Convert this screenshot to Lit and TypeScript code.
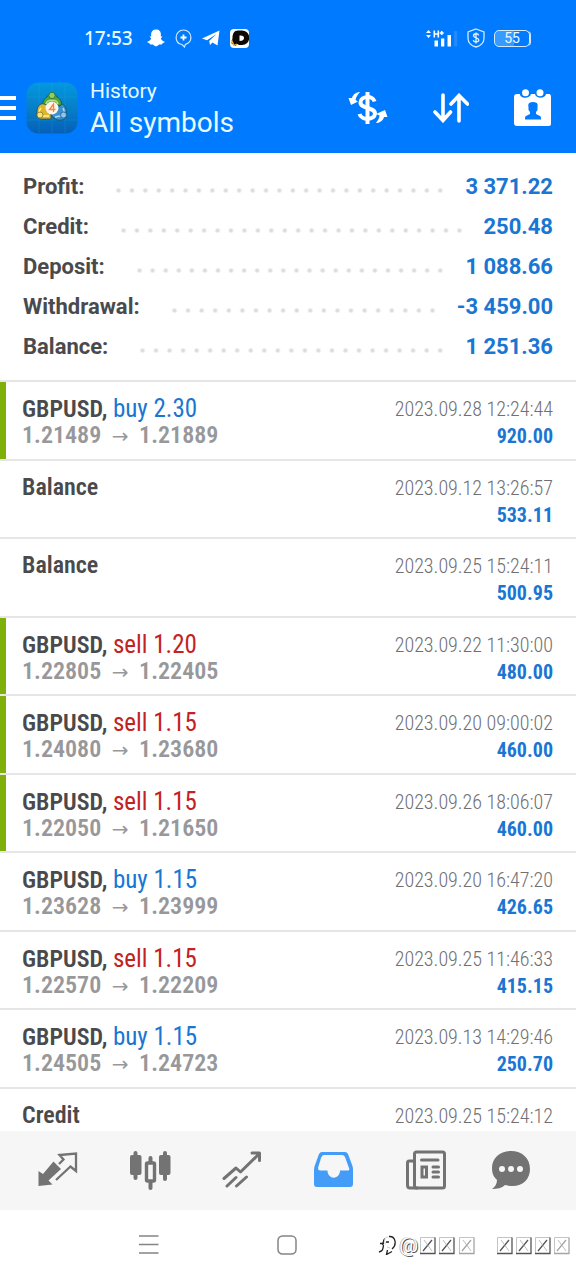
import { LitElement, html, css, svg } from "lit";

const icon = (w: number, h: number, body: unknown) =>
  html`<svg width=${w} height=${h} viewBox="0 0 ${w} ${h}" aria-hidden="true">${body}</svg>`;

const snap = icon(18, 18, svg`<path fill="#fff" d="M9 .5C5.800.5 4 2.500 4.100 5.500L4.200 7.500 2.500 7.600 4.200 9.400C3.600 11 2.300 12 .2 12.800.5 13.900 2.200 14.100 2.700 14.400L3.200 15.600 6 15.500C7 16.500 8 17.300 9 17.300S11 16.500 12 15.500L14.800 15.600 15.300 14.400C15.800 14.100 17.500 13.900 17.800 12.800 15.700 12 14.400 11 13.800 9.400L15.500 7.600 13.800 7.500 13.900 5.500C14 2.500 12.200.5 9 .5Z"/>`);
const pin = icon(17, 19, svg`<path fill="none" stroke="#d4eaff" stroke-width="1.200" d="M8.500 1a7.400 7.400 0 0 1 7.400 7.400c0 3.400-2.400 5.900-5.500 7L9.500 18l-2.500-2.500C3.500 14.800 1.100 12 1.100 8.400A7.400 7.400 0 0 1 8.500 1Z"/><path stroke="#fff" stroke-width="1.800" d="M8.500 5.500v6M5.500 8.500h6"/>`);
const plane = icon(18, 16, svg`<path fill="#fff" d="M0 8.500 17.500.5 15.500 15.500 10.500 12.500 8 15 7.200 11 14.500 4 5 10.200Z"/>`);
const pApp = icon(19, 19, svg`<rect width="19" height="19" rx="4" fill="#fff"/><path fill="#0c0905" d="M8 1.500h4a7 7 0 0 1 0 14.500H9L7.500 15 5.500 17 1.500 14.500 2.500 9C2.500 5 4 1.500 8 1.500Z"/><path d="M1.500 11 4 16.500 7 15" fill="none" stroke="#f4b942" stroke-width="1.300"/><path fill="#fff" d="M9.500 6.500Q14 6 14 9T9.500 12Z"/>`);
const signal = icon(32, 18, svg`<path fill="#fff" d="M0 4 2.500 1 5 4ZM0 6h5L2.500 9ZM8.500 11.500h3.500v6h-3.500ZM15 9.500h3.300v8H15ZM21.500 6H25v11.500h-3.500Z"/><path stroke="#fff" stroke-width="1.600" d="M8.300 1.500v7M12.300 1.500v7M8.300 5h4M15.700 2v4M13.700 4h4"/><path fill="#1f8bff" d="M28 2h3.300v15.500H28Z"/>`);
const shield = icon(18, 20, svg`<path fill="none" stroke="#d4eaff" stroke-width="1.300" d="M9 1 17 4V10.500C17 15 13 18 9 19 5 18 1 15 1 10.500V4Z"/><path fill="none" stroke="#e6f3ff" stroke-width="1.300" d="M11.700 7.400C11 5 6.500 5.300 6.500 7.700S11.800 9.800 11.800 12 7 15 6.300 12.200M9 4.500v11"/>`);

const appLogo = icon(52, 52, svg`<defs><linearGradient id="g" x1="0" y1="0" x2="0" y2="1"><stop offset="0" stop-color="#0398e0"/><stop offset=".5" stop-color="#067fc8"/><stop offset="1" stop-color="#0560b8"/></linearGradient></defs>
<rect x=".5" y=".5" width="51" height="51" rx="12" fill="url(#g)"/><path d="M13 1v50M26 1v50M39 1v50M1 15h50M1 38h50" stroke="#36b0e5" opacity=".2"/>
<g stroke="#154e5c" stroke-width=".8"><path fill="#4ea63d" d="M21 15c1-4 9-4 10 0 4 2 5 5 4 9l-9-2-9 3c-1-5 1-8 4-10Z"/><path fill="#ddb62c" d="M15 22c4-1 8 2 10 7v8h-8c-5 1-8-4-6-7 0-3 1-7 4-8Z"/><path fill="#3b91ce" d="M36 22c4 2 5 6 4 9 2 4-1 7-5 7-4 1-8-2-10-6Z"/></g>
<g fill="none" stroke-width="1.500"><path stroke="#b6e08a" d="M20 22c1-5 11-5 12 0"/><path stroke="#fff19a" d="M15 26c-3 3-2 7 2 8h6"/><path stroke="#acddf6" d="M37 26c2 3 1 7-3 8l-5 1"/></g>
<circle cx="26" cy="13.500" r="3.200" fill="#8fce62" stroke="#2c6b2c" stroke-width=".8"/><circle cx="14" cy="33" r="3" fill="#f7e27c" stroke="#8a7420" stroke-width=".8"/><circle cx="37.500" cy="33" r="3" fill="#8cc8ee" stroke="#1d5b94" stroke-width=".8"/>
<circle cx="26" cy="26" r="6.500" fill="#fff4e8"/><path d="M27.500 30v-8l-4 5.500h6" fill="none" stroke="#ef8a42" stroke-width="1.300"/>`);
const money = icon(40, 34, svg`<g fill="none" stroke="#fff"><path stroke-width="4" d="M26.500 10.500C25 4 12.500 5 12.500 11.500S27 16 27 22.500 13.500 30 11.500 23"/><path stroke-width="4" d="M19.500 1v32"/></g><path fill="#fff" d="M12 1C9 1 5 3 4 7L.5 7 3 14 10 10.500 7.500 9C8 6 10 3 12 1ZM28 32c3 0 7-2 8-6l3.500 0L37 19l-9 4 3.500 1.500c0 3-2 5-3.500 7.500Z"/>`);
const sort = icon(36, 30, svg`<path fill="none" stroke="#fff" stroke-width="3.600" stroke-linecap="round" d="M10 2v25M2 19 10 27.500l7.500-8.500M26 28V3M18 11 26 2.500l8.500 8.500"/>`);
const calendar = icon(38, 38, svg`<path fill="#fff" d="M3 5h3c0 5 10 5 11 0h4c1 5 10 5 11 0h3q2 0 2 3v27q0 2-2 2H3q-3 0-3-3V8q0-3 3-3Z"/><circle cx="11.500" cy="3.800" r="3.500" fill="#fff"/><circle cx="26" cy="3.800" r="3.500" fill="#fff"/><path fill="#007aff" d="M19 13c-5 0-5 3-4.500 5v3l1.500 2v2l-4 2c-1 1-1 1-1 3.500h16c0-2.500 0-2.500-1-3.500l-4-2v-2l1.500-2v-3c.5-2 .5-5-4.500-5Z"/>`);

const navIcons = [
  ["Quotes", icon(42, 42, svg`<path fill="#737373" d="M16.500 11.500 24 19 11.500 30.500 15.500 34.500 1.500 36V21L6 24Z"/><path fill="none" stroke="#737373" stroke-width="2.300" d="M22 14 26.500 9.500 22.500 5 39 3.500V21L33.500 16.500 19 30"/>`)],
  ["Chart", icon(42, 42, svg`<g stroke="#737373" stroke-width="4" stroke-linecap="round"><path d="M6.500 3v25M21.500 8v6M21.500 33v5M36 3v26"/></g><g fill="#737373"><rect x="1" y="5" width="11.500" height="20" rx="2"/><rect x="30" y="5" width="11.500" height="20" rx="2"/></g><rect x="17.500" y="13" width="8" height="18" rx="1" fill="#f6f6f6" stroke="#737373" stroke-width="3.400"/>`)],
  ["Trade", icon(42, 42, svg`<path fill="none" stroke="#737373" stroke-width="3" stroke-linecap="round" stroke-linejoin="round" d="M3 28.500 15 18 19.500 22 38 4M31 3H38.500V10.500M6 36 15 27.500M15.500 36 25.500 27"/>`)],
  ["History", icon(42, 42, svg`<path fill="#439cf8" fill-rule="evenodd" d="M9 2H32Q34 2 35 4L39.500 16Q40 18 40 20V34Q40 37 37 37H4Q1 37 1 34V20Q1 17 2 15L6 4Q7 2 9 2ZM11 5Q9 5 8 8L5 18Q5 20.500 7 20.500H14.500C14.500 30 27 30 27 20.500H35Q37 20.500 36 18L32 7Q31 5 29 5Z"/>`)],
  ["News", icon(42, 42, svg`<g fill="none" stroke="#737373" stroke-width="3"><rect x="9.500" y="2" width="30" height="36" rx="2"/><path d="M9 11H4Q2.500 11 2.500 13V35Q2.500 38 5 38H13"/><g stroke-linecap="round"><path d="M16.500 10H33M28 17h5.500M28 22h5.500M28 27h5.500"/></g><rect x="17" y="17" width="4.500" height="10"/></g>`)],
  ["Messages", icon(42, 42, svg`<path fill="#737373" d="M21 1C10 1 2 8 2 18c0 6 2 9 5 12 0 4-2 7-5 9 5 0 10-1 13-4 15 4 25-4 25-16C40 8 32 1 21 1Z"/><g fill="#f6f6f6"><circle cx="12" cy="19" r="3"/><circle cx="21" cy="19" r="3"/><circle cx="30" cy="19" r="3"/></g>`)],
] as const;

const recents = icon(20, 20, svg`<path stroke="#858585" stroke-width="1.500" d="M0 1h19.500M0 9.500h19.500M0 18h19.500"/>`);
const home = icon(20, 20, svg`<rect x="1" y="1" width="18" height="18" rx="4.500" fill="none" stroke="#858585" stroke-width="1.500"/>`);
const boxGlyph = (x: number, tone: string) => svg`<path fill="none" stroke="#c4c4c4" d="M${x + 0.5} 17.500V1.500H${x + 15}"/><path fill="none" stroke=${tone} stroke-width="1.300" d="M${x + 15} 1.500V17.500H${x}M${x + 12} 4 ${x + 3} 15"/><path stroke="#aaa" stroke-width=".8" d="M${x + 4} 4 ${x + 12} 15"/>`;
const brand = icon(20, 20, svg`<path fill="none" stroke="#222" stroke-width="1.300" d="M7 3.500C5 4.500 5.500 8 4.500 10M2 8.500H6M5.500 10C5 14 5 16 1 17M11 1.500C18 1 19 10 14 14M8 7h3M9.500 15 8.500 19.500 14 16.500"/><path fill="none" stroke="#ccc" d="M10 2C6 2 6 6 7.500 9M9 12 12 13"/>`);
const boxes = icon(152, 19, svg`${[[0, "#555"], [19, "#555"], [39, "#a5a5a5"], [77, "#555"], [96, "#555"], [115, "#555"], [134, "#a5a5a5"]].map(([x, t]) => boxGlyph(x as number, t as string))}`);

const totals = [["Profit:", "3 371.22"], ["Credit:", "250.48"], ["Deposit:", "1 088.66"], ["Withdrawal:", "-3 459.00"], ["Balance:", "1 251.36"]];

interface Deal { name: string; side?: string; lots?: string; from?: string; to?: string; time: string; amount?: string; hit?: boolean }
const trade = (side: string, lots: string, from: string, to: string, time: string, amount: string, hit = false): Deal =>
  ({ name: "GBPUSD,", side, lots, from, to, time, amount, hit });
const deals: Deal[] = [
  trade("buy", "2.30", "1.21489", "1.21889", "2023.09.28 12:24:44", "920.00", true),
  { name: "Balance", time: "2023.09.12 13:26:57", amount: "533.11" },
  { name: "Balance", time: "2023.09.25 15:24:11", amount: "500.95" },
  trade("sell", "1.20", "1.22805", "1.22405", "2023.09.22 11:30:00", "480.00", true),
  trade("sell", "1.15", "1.24080", "1.23680", "2023.09.20 09:00:02", "460.00", true),
  trade("sell", "1.15", "1.22050", "1.21650", "2023.09.26 18:06:07", "460.00", true),
  trade("buy", "1.15", "1.23628", "1.23999", "2023.09.20 16:47:20", "426.65"),
  trade("sell", "1.15", "1.22570", "1.22209", "2023.09.25 11:46:33", "415.15"),
  trade("buy", "1.15", "1.24505", "1.24723", "2023.09.13 14:29:46", "250.70"),
  { name: "Credit", time: "2023.09.25 15:24:12" },
];

class AppRoot extends LitElement {
  static styles = css`
    :host { display: flex; flex-direction: column; height: 100vh; background: #fff; font-family: Roboto, sans-serif; color: #4a4a4d; overflow: hidden; }
    * { box-sizing: border-box; }
    svg { display: block; flex: none; }
    button, a { appearance: none; border: 0; padding: 0; margin: 0; background: none; color: inherit; font: inherit; display: block; text-decoration: none; }
    .top { flex: none; background: #007aff; color: #e6faff; }
    .status { display: flex; align-items: center; height: 76px; padding: 0 46px 0 84px; font-family: "Noto Sans", sans-serif; font-size: 19px; font-weight: 500; }
    .apps { display: flex; align-items: center; gap: 10px; margin-left: 14px; }
    .system { display: flex; align-items: center; gap: 9px; margin-left: auto; }
    .battery { width: 36px; height: 17px; border: 1px solid #d4eaff; border-radius: 5px; background: linear-gradient(90deg, #389bff 55%, #007aff 55%); font: 14px/15px Roboto, sans-serif; text-align: center; box-shadow: 2px 0 0 -1px #d4eaff; }
    .bar { display: flex; align-items: center; height: 77px; padding: 0 24px 14px 0; }
    .menu { width: 16px; height: 24px; display: flex; flex-direction: column; justify-content: space-between; }
    .menu i { height: 4px; background: #fff; }
    .logo { margin: 0 12px 0 10px; }
    .title { flex: 1; font-weight: 400; margin: 0; padding-top: 2px; }
    .title small { display: block; font-size: 21px; line-height: 28px; }
    .title b { display: block; font-weight: 400; font-size: 28px; line-height: 36px; }
    .actions { display: flex; align-items: center; gap: 45px; }
    .totals { flex: none; margin: 0; padding: 14px 23px 13px; font-size: 22px; font-weight: 700; line-height: 40px; }
    .total { display: flex; align-items: center; height: 40px; }
    dt, dd { margin: 0; }
    dd { color: #1976d2; }
    .dots { flex: 1; height: 5px; margin: 7px 18px 0 28px; background: radial-gradient(circle, #dadada 1px, transparent 3px) 0 0 / 13px 5px space no-repeat; }
    .list { flex: 1; min-height: 0; overflow: hidden; margin: 0; padding: 0; list-style: none; font-family: "Roboto Condensed", Roboto, sans-serif; }
    .deal { display: flex; justify-content: space-between; border-top: 2px solid #e6e6e6; padding: 13px 23px 10px 0; line-height: 27px; }
    .deal:nth-child(even) { padding-bottom: 9px; }
    .deal::before { content: ""; width: 6px; margin: -13px 0 -10px; }
    .deal:nth-child(even)::before { margin-bottom: -9px; }
    .hit::before { background: #7fb00a; }
    .left { flex: 1; padding-left: 16px; font-size: 24px; }
    .left div { height: 27px; white-space: nowrap; }
    .name { font-weight: 600; }
    .buy, .sell { font-size: 25px; color: #1976d2; }
    .sell { color: #c32222; }
    .prices { color: #98989b; font-weight: 600; }
    .arrow { font-family: "DejaVu Sans", sans-serif; font-size: 20px; line-height: 20px; font-weight: 400; margin: 0 5px; }
    .right { text-align: right; font-size: 20px; color: #707074; padding-top: 1px; margin-bottom: -1px; }
    time { font-weight: 300; }
    .right b { display: block; color: #1976d2; font-weight: 700; }
    .tabs { flex: none; display: grid; grid-template-columns: repeat(6, 1fr); height: 79px; background: #f6f6f6; padding: 0 12px; }
    .tab { display: flex; justify-content: center; align-items: center; }
    .tab:last-child { padding-right: 14px; }
    .system-nav { flex: none; display: flex; align-items: center; height: 70px; padding: 0 4px 0 139px; }
    .home { margin-left: 118px; }
    .mark { display: flex; align-items: center; margin-left: auto; font-size: 21px; line-height: 24px; color: #fff; text-shadow: 1px 1px 0 #555, -1px 0 0 #bbb; }
    .mark span { margin: 0 2px 0 1px; }
  `;
  render() {
    return html`
      <header class="top">
        <div class="status"><span>17:53</span><span class="apps">${snap}${pin}${plane}${pApp}</span>
          <span class="system">${signal}${shield}<span class="battery">55</span></span></div>
        <div class="bar">
          <button class="menu" aria-label="Menu"><i></i><i></i><i></i></button>
          <span class="logo">${appLogo}</span>
          <h1 class="title"><small>History</small><b>All symbols</b></h1>
          <div class="actions"><button aria-label="Deals">${money}</button><button aria-label="Sort">${sort}</button><button aria-label="Period">${calendar}</button></div>
        </div>
      </header>
      <dl class="totals">${totals.map(([k, v]) => html`<div class="total"><dt>${k}</dt><span class="dots"></span><dd>${v}</dd></div>`)}</dl>
      <ul class="list">${deals.map((d) => html`<li class="deal ${d.hit ? "hit" : ""}">
        <div class="left"><div><span class="name">${d.name}</span>${d.side ? html` <span class=${d.side}>${d.side} ${d.lots}</span>` : ""}</div>
        ${d.from ? html`<div class="prices">${d.from} <span class="arrow">→</span> ${d.to}</div>` : ""}</div>
        <div class="right"><time>${d.time}</time>${d.amount ? html`<b>${d.amount}</b>` : ""}</div></li>`)}</ul>
      <nav class="tabs">${navIcons.map(([n, i]) => html`<a class="tab" href="#" aria-label=${n}>${i}</a>`)}</nav>
      <footer class="system-nav">
        <button aria-label="Recent apps">${recents}</button>
        <button class="home" aria-label="Home">${home}</button>
        <span class="mark">${brand}<span>@</span>${boxes}</span>
      </footer>`;
  }
}
customElements.define("app-root", AppRoot);
